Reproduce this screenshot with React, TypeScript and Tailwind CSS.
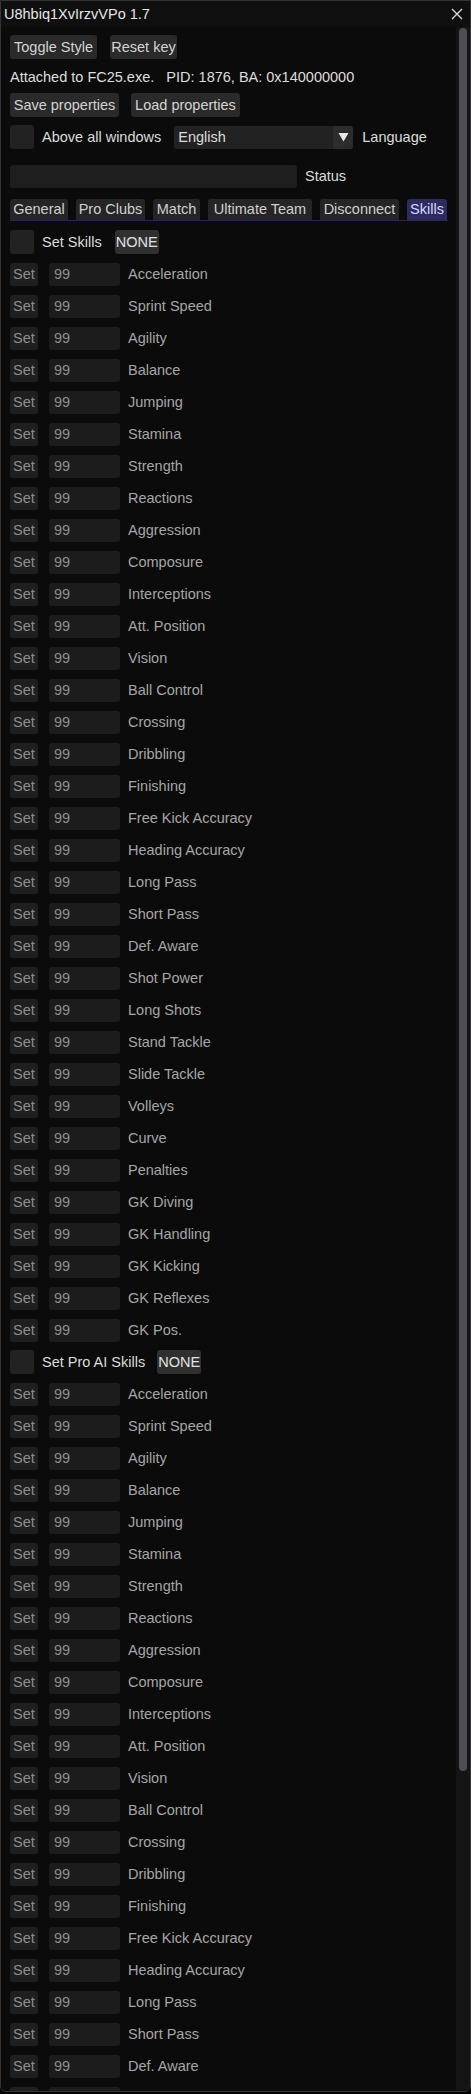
import React from 'react';

const skills = [
	'Acceleration',
	'Sprint Speed',
	'Agility',
	'Balance',
	'Jumping',
	'Stamina',
	'Strength',
	'Reactions',
	'Aggression',
	'Composure',
	'Interceptions',
	'Att. Position',
	'Vision',
	'Ball Control',
	'Crossing',
	'Dribbling',
	'Finishing',
	'Free Kick Accuracy',
	'Heading Accuracy',
	'Long Pass',
	'Short Pass',
	'Def. Aware',
	'Shot Power',
	'Long Shots',
	'Stand Tackle',
	'Slide Tackle',
	'Volleys',
	'Curve',
	'Penalties',
	'GK Diving',
	'GK Handling',
	'GK Kicking',
	'GK Reflexes',
	'GK Pos.',
];

const tabs = [
	{ name: 'General', w: 'w-[58px]' },
	{ name: 'Pro Clubs', w: 'w-[69px]' },
	{ name: 'Match', w: 'w-[47px]' },
	{ name: 'Ultimate Team', w: 'w-[104px]' },
	{ name: 'Disconnect', w: 'w-[79px]' },
	{ name: 'Skills', w: 'w-[40px]', active: true },
];

const Button = ({ label, className }: { label: string; className: string }) => (
	<div
		className={`h-[24px] flex items-center justify-center rounded-[3px] bg-[#2a2a2a] text-[#d4d4d4] ${className}`}
	>
		{label}
	</div>
);

const Checkbox = () => <div className="w-[24px] h-[24px] rounded-[3px] bg-[#222222] flex-none" />;

const SkillRow = ({ name }: { name: string }) => (
	<div className="h-[32px] flex items-center">
		<div className="w-[28px] h-[23px] rounded-[3px] bg-[#1f1f1f] text-[#8e8e8e] flex items-center justify-center">
			Set
		</div>
		<div className="ml-[11px] w-[71px] h-[23px] rounded-[3px] bg-[#1c1c1c] text-[#8e8e8e] flex items-center pl-[5px]">
			99
		</div>
		<div className="ml-[8px] text-[#a6a6a6]">{name}</div>
	</div>
);

// the second list runs past the window bottom, only the visible rows are drawn
const SkillSection = ({ title, noneX, count }: { title: string; noneX: string; count: number }) => (
	<>
		<div className="h-[32px] flex items-center">
			<Checkbox />
			<div className="ml-[8px] text-[#dcdcdc]">{title}</div>
			<div
				className={`${noneX} w-[44px] h-[24px] rounded-[3px] bg-[#303030] text-[#e2e2e2] flex items-center justify-center`}
			>
				NONE
			</div>
		</div>
		{skills.slice(0, count).map((s) => (
			<SkillRow key={title + s} name={s} />
		))}
	</>
);

export default function App() {
	return (
		<div
			className="w-[471px] h-[2094px] bg-black text-[14.5px] leading-none"
			style={{ fontFamily: '"Liberation Sans", Arial, sans-serif' }}
		>
			<div className="w-[471px] h-[2092px] flex flex-col rounded-b-[6px] border border-[#353535] bg-[#0b0b0b] overflow-hidden">
				{/* title bar */}
				<div className="h-[26px] flex-none flex items-center justify-between bg-[#0f0f0f] pl-[3px] pr-[6px]">
					<span className="text-[#e6e6e6]">U8hbiq1XvIrzvVPo 1.7</span>
					<svg width="12" height="12" viewBox="0 0 12 12" className="mr-[1px]">
						<path d="M1 1 L11 11 M11 1 L1 11" stroke="#d6d6d6" strokeWidth="1.4" />
					</svg>
				</div>
				<div className="flex-1 flex min-h-0">
					<div className="flex-1 min-w-0 pl-[9px] pr-[8px] overflow-hidden">
						<div className="mt-[8px] h-[24px] flex items-center gap-[13px]">
							<Button label="Toggle Style" className="w-[87px]" />
							<Button label="Reset key" className="w-[67px]" />
						</div>
						<div className="mt-[6px] h-[24px] flex items-center text-[#dedede] whitespace-pre">
							Attached to FC25.exe.   PID: 1876, BA: 0x140000000
						</div>
						<div className="mt-[4px] h-[24px] flex items-center gap-[12px]">
							<Button label="Save properties" className="w-[109px]" />
							<Button label="Load properties" className="w-[109px]" />
						</div>
						<div className="mt-[8px] h-[24px] flex items-center">
							<Checkbox />
							<div className="ml-[8px] text-[#dcdcdc]">Above all windows</div>
							<div className="ml-[13px] w-[179px] h-[23px] rounded-[3px] bg-[#222222] flex items-center overflow-hidden">
								<span className="pl-[4px] flex-1 text-[#dcdcdc]">English</span>
								<div className="w-[20px] h-full bg-[#2c2c2c] flex items-center justify-center">
									<svg width="11" height="10" viewBox="0 0 11 10">
										<path d="M0.5 1 L10.5 1 L5.5 9.5 Z" fill="#e8e8e8" />
									</svg>
								</div>
							</div>
							<div className="ml-[9px] text-[#dcdcdc]">Language</div>
						</div>
						<div className="mt-[15px] h-[24px] flex items-center">
							<div className="w-[287px] h-[23px] rounded-[3px] bg-[#1e1e1e]" />
							<div className="ml-[8px] text-[#dcdcdc]">Status</div>
						</div>
						<div className="mt-[10px] h-[22px] flex items-end gap-[8px]">
							{tabs.map((t) => (
								<div
									key={t.name}
									className={`${t.w} h-[21px] rounded-t-[3px] flex items-center justify-center ${
										t.active ? 'bg-[#2d2b60] text-[#d8d8ff]' : 'bg-[#252525] text-[#d0d0d0]'
									}`}
								>
									{t.name}
								</div>
							))}
						</div>
						<div className="w-[438px] h-[1px] bg-[#2a2850]" />
						<div className="mt-[5px]">
							<SkillSection title="Set Skills" noneX="ml-[13px]" count={skills.length} />
							<SkillSection title="Set Pro AI Skills" noneX="ml-[12px]" count={23} />
						</div>
					</div>
					{/* scrollbar */}
					<div className="w-[14px] flex-none bg-[#141414] flex justify-center pt-[1px]">
						<div className="w-[8px] h-[1743px] rounded-[4px] bg-[#4e4d54]" />
					</div>
				</div>
			</div>
		</div>
	);
}
